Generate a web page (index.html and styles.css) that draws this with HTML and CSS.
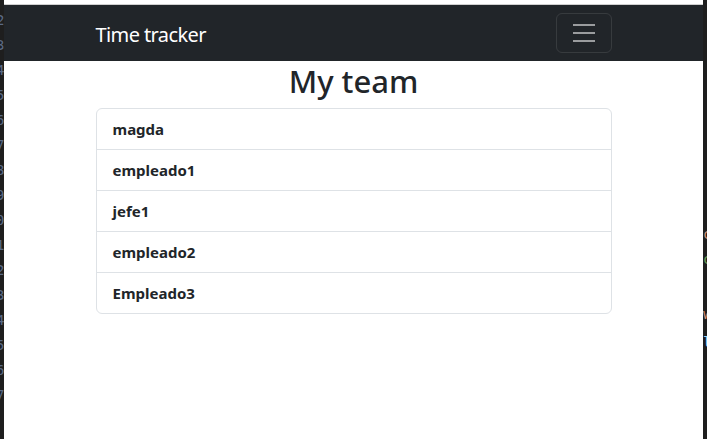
FILE: index.html
```html
<!DOCTYPE html>
<html lang="en">
<head>
<meta charset="utf-8">
<title>Time tracker</title>
<link rel="stylesheet" href="styles.css">
</head>
<body>
<div class="screen">
  <div class="editor-edge left">
    <span>2</span><span>3</span><span>4</span><span>5</span><span>6</span><span>7</span><span>8</span><span>9</span><span>0</span><span>1</span><span>2</span><span>3</span><span>4</span><span>5</span><span>6</span><span>7</span>
  </div>
  <div class="window">
    <div class="window-top"></div>
    <nav class="navbar">
      <div class="container nav-inner">
        <a class="brand" href="#">Time tracker</a>
        <button class="toggler" type="button" aria-label="Toggle navigation">
          <svg width="30" height="30" viewBox="0 0 30 30" aria-hidden="true">
            <path d="M4 7h22M4 15h22M4 23h22" stroke="rgba(255,255,255,0.55)" stroke-width="2" stroke-linecap="butt"/>
          </svg>
        </button>
      </div>
    </nav>
    <main class="container">
      <h1 class="title">My team</h1>
      <ul class="list-group">
        <li class="list-item">magda</li>
        <li class="list-item">empleado1</li>
        <li class="list-item">jefe1</li>
        <li class="list-item">empleado2</li>
        <li class="list-item">Empleado3</li>
      </ul>
    </main>
  </div>
  <div class="editor-edge right">
    <span class="c-str">c</span>
    <span class="c-cmt">c</span>
    <span class="c-str c-gap">w</span>
    <span class="c-var">l</span>
  </div>
</div>
</body>
</html>
```

FILE: styles.css
```css
* { box-sizing: border-box; }
html, body { margin: 0; padding: 0; }
body {
  background: #1e1e1e;
  font-family: "Noto Sans", "Open Sans", sans-serif;
  color: #212529;
  overflow: hidden;
}
.screen {
  display: flex;
  width: 707px;
  height: 439px;
}
.editor-edge {
  flex: 0 0 auto;
  background: #1e1e1e;
  overflow: hidden;
  font-family: "DejaVu Sans Mono", monospace;
  font-size: 14px;
  line-height: 25px;
}
.editor-edge.left {
  width: 4px;
  display: flex;
  flex-direction: column;
  padding-top: 8px;
  color: #5a6a85;
}
.editor-edge.left span { display: block; margin-left: -4px; }
.editor-edge.right {
  width: 4px;
  display: flex;
  flex-direction: column;
  padding-top: 222px;
}
.editor-edge.right span { display: block; height: 25px; }
.c-str { color: #ce9178; }
.c-cmt { color: #6a9955; margin-top: 0; }
.c-gap { margin-top: 30px; }
.c-var { color: #9cdcfe; margin-top: 3px; }

.window {
  flex: 0 0 699px;
  background: #fff;
  display: flex;
  flex-direction: column;
}
.window-top {
  height: 5px;
  background: #fff;
  border-bottom: 1px solid #d0d0d0;
}
.navbar {
  background: #212529;
  height: 56px;
  display: flex;
  align-items: center;
}
.container {
  width: 540px;
  margin: 0 auto;
  padding: 0 12px;
}
.nav-inner {
  display: flex;
  align-items: center;
  justify-content: space-between;
}
.brand {
  color: #fff;
  text-decoration: none;
  font-size: 20px;
  line-height: 30px;
  letter-spacing: -0.6px;
  padding-top: 4px;
}
.toggler {
  width: 56px;
  height: 40px;
  padding: 0;
  background: transparent;
  border: 1px solid rgba(255,255,255,0.1);
  border-radius: 6px;
  display: flex;
  align-items: center;
  justify-content: center;
}
.toggler svg { display: block; }
.title {
  margin: 0 0 8px;
  text-align: center;
  font-size: 31px;
  line-height: 38px;
  font-weight: 500;
  color: #212529;
  padding-top: 1px;
}
.list-group {
  list-style: none;
  margin: 0;
  padding: 0;
  border: 1px solid #dee2e6;
  border-radius: 6px;
}
.list-item {
  padding: 8px 16px;
  font-size: 15px;
  line-height: 24px;
  font-weight: 700;
  border-top: 1px solid #dee2e6;
}
.list-item:first-child { border-top: 0; }
```
